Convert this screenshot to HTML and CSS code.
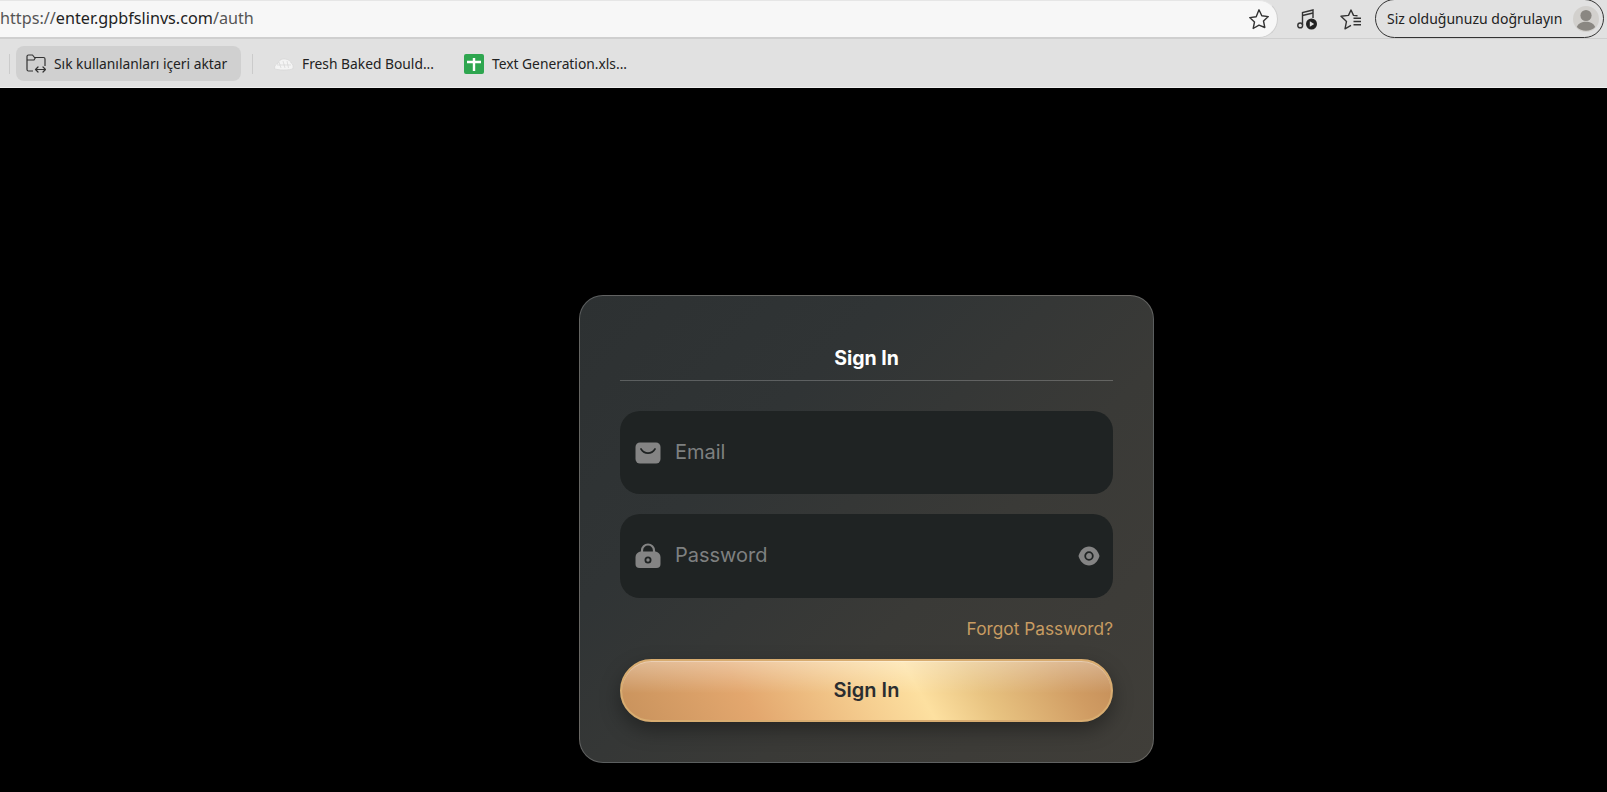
FILE: index.html
```html
<!DOCTYPE html>
<html lang="en">
<head>
  <meta charset="UTF-8" />
  <meta name="viewport" content="width=device-width, initial-scale=1.0" />
  <title>Sign In</title>
  <link rel="stylesheet" href="styles.css">
</head>
<body>
  <header class="browser">
    <div class="toolbar">
      <div class="address">
        <span class="url"><span class="url-dim">https://</span>enter.gpbfslinvs.com<span class="url-dim">/auth</span></span>
        <svg class="icon-star" width="22" height="22" viewBox="0 0 22 22" fill="none" stroke="#333" stroke-width="1.4" stroke-linejoin="round"><path d="M11 1.8l2.8 6 6.5.8-4.8 4.4 1.3 6.5L11 17.2l-5.8 3.3 1.3-6.5-4.8-4.4 6.5-.8z"/></svg>
      </div>
      <svg class="tool-music" width="22" height="22" viewBox="0 0 22 22" fill="none" stroke="#333" stroke-width="1.4"><path d="M6.5 17V4.5L17 2v8"/><path d="M6.5 7.5L17 5"/><circle cx="4.2" cy="17.4" r="2.4"/><circle cx="15.5" cy="16" r="5.5" fill="#222" stroke="none"/><path d="M13.8 13.2l4.4 2.8-4.4 2.8z" fill="#e0e0e0" stroke="none"/></svg>
      <svg class="tool-fav" width="22" height="21" viewBox="0 0 22 21" fill="none" stroke="#333" stroke-width="1.4" stroke-linejoin="round"><path d="M17.5 6.800l-4-.4L11 1 8.500 6.400 1 7.300l5.500 5.100L5 19.800l6-3.400"/><path d="M13.500 9.200h7.500M13.500 12.500h7.500M13.500 15.800h7.500"/></svg>
      <div class="profile">
        <span>Siz olduğunuzu doğrulayın</span>
        <svg class="avatar" width="26" height="26" viewBox="0 0 26 26"><circle cx="13" cy="13" r="13" fill="#d2d0cd"/><circle cx="13" cy="9.5" r="5.6" fill="#8a8782"/><path d="M3.8 21c1.6-3.8 5-5.2 9.2-5.2s7.6 1.4 9.2 5.2a13 13 0 0 1-18.4 0z" fill="#8a8782"/></svg>
      </div>
    </div>
    <nav class="bookmarks">
      <span class="sep"></span>
      <a class="import-btn" href="#">
        <svg width="20" height="19" viewBox="0 0 20 19" fill="none" stroke="#333" stroke-width="1.2" stroke-linejoin="round"><path d="M7 17H2.500A1.500 1.500 0 0 1 1 15.500V2.500A1.500 1.500 0 0 1 2.500 1h4l2 2.500h9A1.500 1.500 0 0 1 19 5v7"/><path d="M1 6h7l1.500-2.500"/><path d="M10 15.500h9M12 13l-2.500 2.500L12 18M17 13l2.500 2.500L17 18" stroke-linecap="round"/></svg>
        Sık kullanılanları içeri aktar
      </a>
      <span class="sep sep-second"></span>
      <a class="mark mark-bread" href="#">
        <svg width="20" height="14" viewBox="0 0 20 14" fill="#f4f4f4" stroke="#d6d6d6" stroke-width="0.7"><path d="M.5 11.500c0-3 1.500-4.500 3.500-5C5 3 8 1.500 11 2c3.500.3 5.500 2 6.200 4 1.500.7 2.300 3 1.800 5.500-2 2-16.500 2-18.500 0z"/><path d="M5 5l2 6M9 4l2 7M13 4l1.500 7M3 8h14" fill="none"/></svg>
        Fresh Baked Bould...
      </a>
      <a class="mark mark-sheet" href="#">
        <svg width="20" height="20" viewBox="0 0 20 20"><rect width="20" height="20" rx="2" fill="#2ea64f"/><path d="M3 8h14M10 4v13" stroke="#fff" stroke-width="2.400" fill="none"/></svg>
        Text Generation.xls...
      </a>
    </nav>
  </header>

  <main class="page">
    <form class="card">
      <h2 class="card-title">Sign In</h2>

      <div class="field">
        <svg class="field-icon" width="26" height="22" viewBox="0 0 26 22"><rect x="0.500" y="0.500" width="25" height="21" rx="4.500" fill="#848484"/><path d="M6 7c3.500 5.500 10.500 5.500 14 0" fill="none" stroke="#1f2323" stroke-width="1.700" stroke-linecap="round"/></svg>
        <input type="email" placeholder="Email">
      </div>

      <div class="field">
        <svg class="field-icon" width="26" height="26" viewBox="0 0 26 26"><path d="M7 11V7.500a6 6 0 0 1 12 0V11" fill="none" stroke="#848484" stroke-width="2.200"/><path d="M6.500 8.500h13c3.500 0 6 2.500 6 6V21a4 4 0 0 1-4 4h-17a4 4 0 0 1-4-4v-6.500c0-3.500 2.500-6 6-6z" fill="#848484"/><circle cx="13" cy="17" r="2.600" fill="none" stroke="#1f2323" stroke-width="1.800"/></svg>
        <input type="password" placeholder="Password">
        <svg class="eye-icon" width="22" height="20" viewBox="0 0 22 20"><path d="M11 .5C16 .5 20 4.500 21.500 10 20 15.500 16 19.500 11 19.500S2 15.500.5 10C2 4.500 6 .5 11 .5z" fill="#848484"/><circle cx="11" cy="10" r="3.800" fill="none" stroke="#1f2323" stroke-width="1.800"/></svg>
      </div>

      <div class="forgot-row"><a href="#">Forgot Password?</a></div>

      <button type="submit" class="submit-btn">Sign In</button>
    </form>
  </main>
</body>
</html>
```

FILE: styles.css
```css
* {
  box-sizing: border-box;
  margin: 0;
  padding: 0;
}

html, body {
  height: 100%;
  overflow: hidden;
}

body {
  background-color: #000;
  font-family: Inter, "Noto Sans", sans-serif;
}

.browser {
  background-color: #e1e1e1;
  border-bottom: 1px solid #f0f0f0;
  font-family: "Noto Sans", "Open Sans", sans-serif;
  color: #222;
}

.toolbar {
  height: 38px;
  display: flex;
  align-items: center;
}

.address {
  width: 1278px;
  height: 38px;
  background-color: #f7f7f7;
  border: 1px solid #cfcfcf;
  border-left: none;
  border-top-color: #e6e6e6;
  border-radius: 0 19px 19px 0;
  display: flex;
  align-items: center;
  justify-content: space-between;
  padding-right: 7px;
  overflow: hidden;
}

.url {
  font-size: 16.2px;
  line-height: 20px;
  padding-bottom: 2px;
  color: #222;
}

.url-dim {
  color: #555;
}

.tool-music {
  margin-left: 18px;
}

.tool-fav {
  margin-left: 22px;
}

.profile {
  width: 229px;
  height: 39px;
  margin-left: 13px;
  margin-top: -1px;
  border: 1px solid #333;
  border-radius: 20px;
  display: flex;
  align-items: center;
  justify-content: space-between;
  padding: 0 4px 0 11px;
  font-size: 14px;
}

.bookmarks {
  height: 49px;
  display: flex;
  align-items: center;
  font-size: 13.8px;
  padding: 1px 0 0 9px;
  border-top: 1px solid #cfcfcf;
}

.bookmarks a {
  color: #222;
  text-decoration: none;
  display: flex;
  align-items: center;
  white-space: nowrap;
}

.sep {
  width: 1px;
  height: 20px;
  background-color: #cbcbcb;
}

.sep-second {
  margin-left: 11px;
}

.import-btn {
  margin-left: 6px;
  width: 225px;
  height: 35px;
  background-color: #d0d0d0;
  border-radius: 8px;
  padding-left: 10px;
  gap: 8px;
}

.mark-bread {
  margin-left: 21px;
  gap: 8px;
}

.mark-sheet {
  margin-left: 30px;
  gap: 8px;
}

.page {
  padding: 207px 0 0 579px;
}

.card {
  width: 575px;
  height: 468px;
  padding: 50px 40px 0;
  border: 1px solid rgba(255, 255, 255, 0.22);
  border-radius: 24px;
  background: linear-gradient(135deg, #2d3132 0%, #303435 30%, #3a3a37 62%, #403e39 100%);
}

.card-title {
  color: #fff;
  font-size: 19.5px;
  font-weight: 700;
  line-height: 24px;
  text-align: center;
  padding-bottom: 10px;
  border-bottom: 1px solid rgba(255, 255, 255, 0.22);
  margin-bottom: 30px;
}

.field {
  height: 83px;
  margin-bottom: 20px;
  padding: 0 13px 0 15px;
  background-color: #1f2323;
  border-radius: 20px;
  display: flex;
  align-items: center;
}

.field + .field {
  height: 84px;
  margin-bottom: 0;
}

.field-icon {
  flex: none;
}

.field input {
  flex: 1;
  min-width: 0;
  margin-left: 14px;
  padding-bottom: 2px;
  background: transparent;
  border: none;
  outline: none;
  color: #fff;
  font-family: inherit;
  font-size: 20px;
}

.field input::placeholder {
  color: #7e8080;
  opacity: 1;
}

.eye-icon {
  flex: none;
}

.forgot-row {
  margin-top: 20px;
  text-align: right;
  font-size: 17.3px;
  line-height: 22px;
}

.forgot-row a {
  color: #c89c62;
  text-decoration: none;
}

.submit-btn {
  display: block;
  width: 100%;
  height: 63px;
  margin-top: 19px;
  padding-bottom: 2px;
  border: 2px solid #d8ac70;
  border-radius: 32px;
  color: #2a2d30;
  font-family: inherit;
  font-size: 20px;
  font-weight: 600;
  cursor: pointer;
  background:
    linear-gradient(180deg, rgba(255, 255, 255, 0.32) 0%, rgba(255, 255, 255, 0) 55%),
    linear-gradient(60deg, #c8925c 0%, #e3a76e 26%, #f5cd8f 48%, #fde0a0 60%, #e8c381 72%, #d09c63 90%, #c48d58 100%);
  box-shadow: inset 0 1px 0 rgba(255, 255, 255, 0.3), 0 8px 20px rgba(0, 0, 0, 0.35);
}
```
